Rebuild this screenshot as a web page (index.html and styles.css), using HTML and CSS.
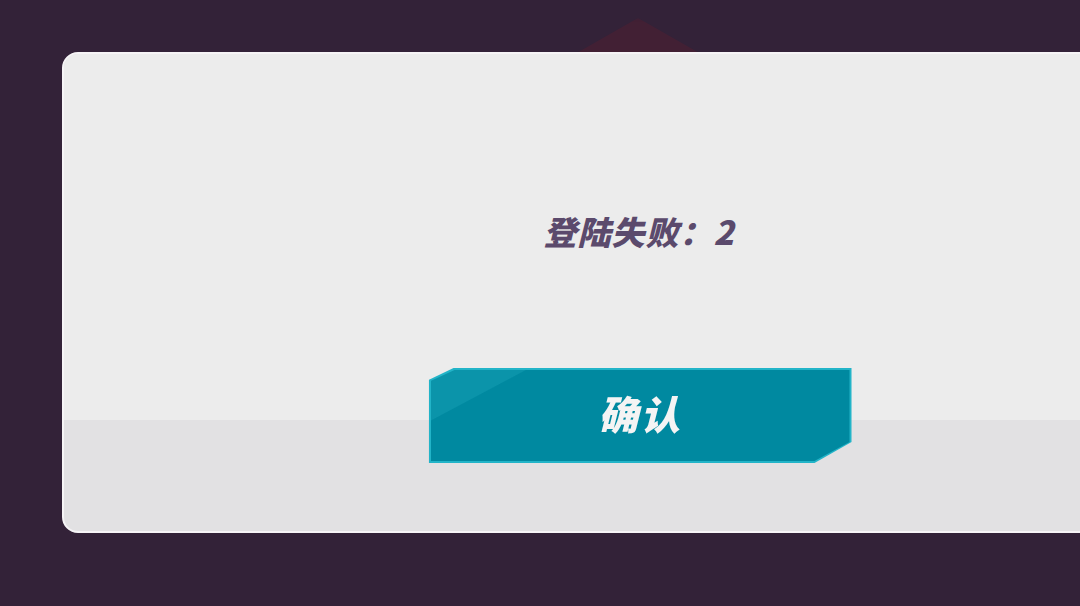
FILE: index.html
```
<!DOCTYPE html>
<html lang="zh-CN">
<head>
    <meta charset="UTF-8">
    <meta name="viewport" content="width=device-width, initial-scale=1.0">
    <title>登陆失败</title>
    <link rel="stylesheet" href="styles.css">
</head>
<body>
    <div class="backdrop">
        <div class="backdrop-peak"></div>
    </div>
    <div class="dialog">
        <div class="dialog-body">
            <p class="dialog-message">登陆失败：2</p>
        </div>
        <div class="dialog-footer">
            <button class="confirm-btn"><span class="confirm-inner">确认</span></button>
        </div>
    </div>
</body>
</html>
```

FILE: styles.css
```
html, body {
    margin: 0;
    height: 100%;
    overflow: hidden;
}
body {
    background-color: #332238;
    font-family: "Noto Sans CJK SC", "Noto Sans", sans-serif;
    position: relative;
    padding-top: 52px;
    box-sizing: border-box;
}
/* red peak peeking from behind the panel */
.backdrop {
    position: absolute;
    left: 0;
    top: 0;
    width: 100%;
    height: 60px;
    z-index: 0;
}
.backdrop-peak {
    position: absolute;
    left: 568px;
    top: 18px;
    width: 140px;
    height: 40px;
    background: #462034;
    clip-path: polygon(50% 0, 100% 100%, 0 100%);
    filter: blur(2px);
    opacity: 0.85;
}
.dialog {
    position: relative;
    z-index: 1;
    margin-left: 62px;
    width: 1154px;
    height: 481px;
    border: 2px solid #f6f4f6;
    border-radius: 16px;
    box-sizing: border-box;
    overflow: hidden;
    display: flex;
    flex-direction: column;
    background: #e2e1e3;
}
.dialog-body {
    height: 314px;
    flex: none;
    background: #ececec;
    display: flex;
    justify-content: center;
    align-items: flex-start;
}
.dialog-message {
    margin: 152px 0 0;
    font-size: 33px;
    line-height: 50px;
    font-weight: 900;
    font-style: italic;
    color: #5b4a6c;
    letter-spacing: 1px;
}
.dialog-footer {
    flex: 1;
    position: relative;
    display: flex;
    justify-content: center;
    align-items: flex-start;
}
.dialog-footer::before {
    content: "";
    position: absolute;
    left: 0;
    right: 0;
    top: 0;
    height: 52px;
    background: #ececec;
}
.confirm-btn {
    position: relative;
    margin-top: 0;
    margin-left: 2px;
    width: 423px;
    height: 95px;
    padding: 2px;
    border: none;
    background: #22b4c8;
    clip-path: polygon(25px 0, 100% 0, 100% 74px, 386px 100%, 0 100%, 0 12px);
    cursor: pointer;
    filter: drop-shadow(0 1px 1px rgba(0,0,0,0.15));
}
.confirm-inner {
    display: flex;
    align-items: center;
    justify-content: center;
    width: 100%;
    height: 100%;
    background: linear-gradient(152deg, #0b94aa 0, #0b94aa 44px, #0089a0 45px);
    clip-path: polygon(24px 0, 100% 0, 100% 72px, 384px 100%, 0 100%, 0 11px);
    color: #f4f4f4;
    font-family: "Noto Sans CJK SC", sans-serif;
    font-size: 40px;
    font-weight: 900;
    font-style: italic;
    letter-spacing: 2px;
    padding-bottom: 6px;
    box-sizing: border-box;
}
```
